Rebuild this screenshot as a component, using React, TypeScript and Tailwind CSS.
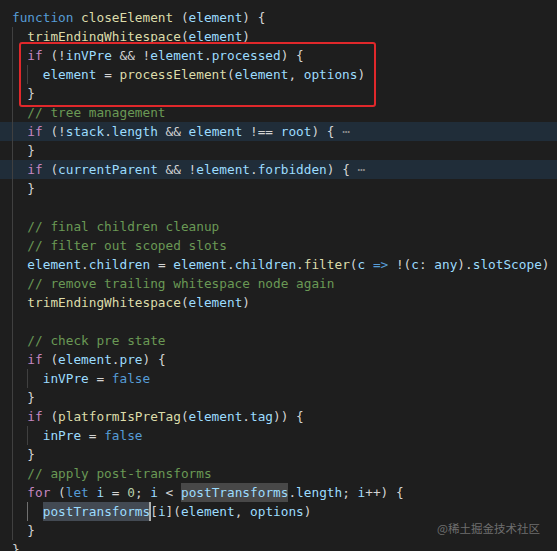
import React from 'react';

type Tok = [string, string];

// VS Code Dark+ token colours
const K = 'text-[#569cd6]'; // keyword / storage
const C = 'text-[#c586c0]'; // control flow
const F = 'text-[#dcdcaa]'; // function names
const V = 'text-[#9cdcfe]'; // variables
const M = 'text-[#6a9955]'; // comments
const P = 'text-[#d4d4d4]'; // punctuation
const N = 'text-[#b5cea8]'; // numbers

type Line = {
    indent: number;
    toks: Tok[];
    fold?: boolean;
};

const lines: Line[] = [
    { indent: 0, toks: [['function', K], [' ', P], ['closeElement', F], [' (', P], ['element', V], [') {', P]] },
    { indent: 1, toks: [['trimEndingWhitespace', F], ['(', P], ['element', V], [')', P]] },
    { indent: 1, toks: [['if', C], [' (!', P], ['inVPre', V], [' && !', P], ['element', V], ['.', P], ['processed', V], [') {', P]] },
    { indent: 2, toks: [['element', V], [' = ', P], ['processElement', F], ['(', P], ['element', V], [', ', P], ['options', V], [')', P]] },
    { indent: 1, toks: [['}', P]] },
    { indent: 1, toks: [['// tree management', M]] },
    { indent: 1, fold: true, toks: [['if', C], [' (!', P], ['stack', V], ['.', P], ['length', V], [' && ', P], ['element', V], [' !== ', P], ['root', V], [') {', P]] },
    { indent: 1, toks: [['}', P]] },
    { indent: 1, fold: true, toks: [['if', C], [' (', P], ['currentParent', V], [' && !', P], ['element', V], ['.', P], ['forbidden', V], [') {', P]] },
    { indent: 1, toks: [['}', P]] },
    { indent: 1, toks: [] },
    { indent: 1, toks: [['// final children cleanup', M]] },
    { indent: 1, toks: [['// filter out scoped slots', M]] },
    { indent: 1, toks: [['element', V], ['.', P], ['children', V], [' = ', P], ['element', V], ['.', P], ['children', V], ['.', P], ['filter', F], ['(', P], ['c', V], [' ', P], ['=>', K], [' !(', P], ['c', V], [': ', P], ['any', V], [').', P], ['slotScope', V], [')', P]] },
    { indent: 1, toks: [['// remove trailing whitespace node again', M]] },
    { indent: 1, toks: [['trimEndingWhitespace', F], ['(', P], ['element', V], [')', P]] },
    { indent: 1, toks: [] },
    { indent: 1, toks: [['// check pre state', M]] },
    { indent: 1, toks: [['if', C], [' (', P], ['element', V], ['.', P], ['pre', V], [') {', P]] },
    { indent: 2, toks: [['inVPre', V], [' = ', P], ['false', K]] },
    { indent: 1, toks: [['}', P]] },
    { indent: 1, toks: [['if', C], [' (', P], ['platformIsPreTag', F], ['(', P], ['element', V], ['.', P], ['tag', V], [')) {', P]] },
    { indent: 2, toks: [['inPre', V], [' = ', P], ['false', K]] },
    { indent: 1, toks: [['}', P]] },
    { indent: 1, toks: [['// apply post-transforms', M]] },
    { indent: 1, toks: [['for', C], [' (', P], ['let', K], [' ', P], ['i', V], [' = ', P], ['0', N], ['; ', P], ['i', V], [' < ', P], ['postTransforms', V + ' bg-[#484848]'], ['.', P], ['length', V], ['; ', P], ['i', V], ['++) {', P]] },
    { indent: 2, toks: [['postTransforms', V + ' bg-[#434a53] cursor-here'], ['[', P], ['i', V], [']', P], ['(', P], ['element', V], [', ', P], ['options', V], [')', P]] },
    { indent: 1, toks: [['}', P]] },
    { indent: 0, toks: [['}', P]] },
];

export default function App() {
    return (
        <div
            className="relative w-[557px] h-[551px] bg-[#1e1e1e] overflow-hidden pt-[8px]"
            style={{ fontFamily: '"DejaVu Sans Mono", "Liberation Mono", monospace' }}
        >
            {lines.map((line, i) => (
                <div
                    key={i}
                    className={`flex h-[19px] leading-[19px] text-[12.75px] whitespace-pre pl-[12px] ${line.fold ? 'bg-[#202d39]' : ''}`}
                >
                    {[...Array(line.indent)].map((_, j) => (
                        <span
                            key={j}
                            className={`inline-block w-[15.36px] h-[19px] shrink-0 border-l ${i === 26 && j === 1 ? 'border-[#707070]' : 'border-[#404040]'}`}
                        />
                    ))}
                    {line.toks.map(([text, cls], j) => {
                        const hasCursor = cls.includes('cursor-here');
                        return (
                            <span key={j} className={`relative ${cls.replace(' cursor-here', '')}`}>
                                {text}
                                {hasCursor && (
                                    <span className="absolute right-[-1px] top-0 w-[2px] h-[19px] bg-[#aeafad]" />
                                )}
                            </span>
                        );
                    })}
                    {line.fold && <span className="text-[#8b8b8b]"> ⋯</span>}
                </div>
            ))}

            {/* red annotation box */}
            <div className="absolute left-[19px] top-[42px] w-[357px] h-[65px] border-2 border-[#e0282b] rounded-[3px]" />

            {/* watermark */}
            <div
                className="absolute left-[437px] top-[520px] text-[11.5px] leading-[16px] text-[#6f6f6f] whitespace-nowrap"
                style={{ fontFamily: '"Noto Sans CJK SC", "Noto Sans", sans-serif' }}
            >
                @稀土掘金技术社区
            </div>
        </div>
    );
}
